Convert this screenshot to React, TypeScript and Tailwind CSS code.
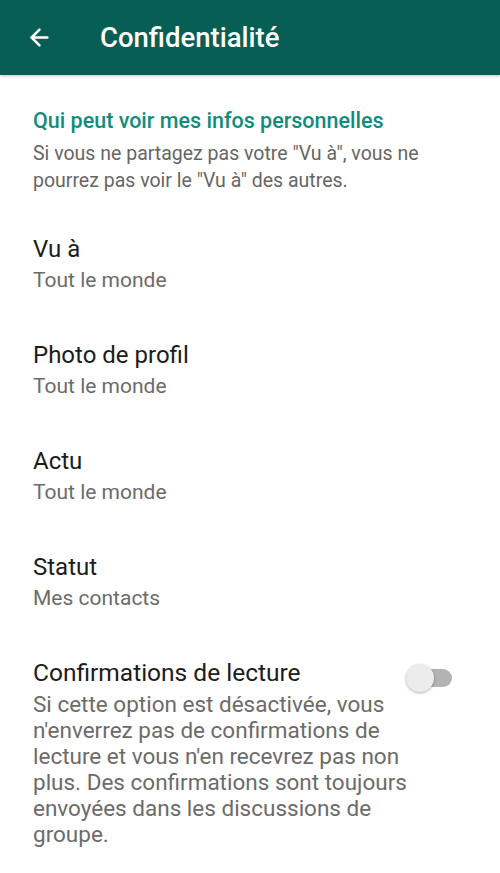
import { ArrowLeft } from "lucide-react";

const items = [
  { title: "Vu à", value: "Tout le monde" },
  { title: "Photo de profil", value: "Tout le monde" },
  { title: "Actu", value: "Tout le monde" },
  { title: "Statut", value: "Mes contacts" },
];

export default function App() {
  return (
    <div className="min-h-[873px] w-full bg-white font-['Roboto',sans-serif]">
      {/* Top bar */}
      <header className="flex h-[75px] items-center bg-[#075e54] px-[26px] shadow-[0_1px_3px_rgba(0,0,0,0.25)]">
        <ArrowLeft className="size-[27px] text-white" strokeWidth={2.2} />
        <h1 className="ml-[47px] text-[27.5px] font-medium text-white">
          Confidentialité
        </h1>
      </header>

      <section className="px-[33px] pt-[33px]">
        <h2 className="text-[21.5px] leading-[26px] font-medium text-[#128c7e]">
          Qui peut voir mes infos personnelles
        </h2>
        <p className="mt-[6px] text-[19.5px] leading-[27px] text-[#666666]">
          Si vous ne partagez pas votre "Vu à", vous ne pourrez pas voir le
          "Vu à" des autres.
        </p>
      </section>

      {/* Rows */}
      <div className="mt-[28px] flex flex-col">
        {items.map((item) => (
          <div key={item.title} className="flex h-[106px] flex-col px-[33px] pt-[12px]">
            <span className="text-[24px] leading-[30px] text-[#1c1c1c]">
              {item.title}
            </span>
            <span className="text-[21px] leading-[32px] text-[#6b6b6b]">
              {item.value}
            </span>
          </div>
        ))}

        <div className="flex flex-col px-[33px] pt-[12px]">
          <div className="flex h-[30px] items-start justify-between">
            <span className="text-[24.5px] leading-[30px] text-[#1c1c1c]">
              Confirmations de lecture
            </span>
            {/* Switch */}
            <div className="relative mt-[5px] mr-[15px] flex h-[30px] w-[46px] shrink-0 items-center">
              <div className="h-[18px] w-full rounded-full bg-[#b3b3b3]" />
              <div className="absolute top-[1px] left-0 size-[28px] rounded-full bg-[#ececec] shadow-[0_1px_3px_rgba(0,0,0,0.3)]" />
            </div>
          </div>
          <p className="mt-[3px] w-[385px] text-[22.5px] leading-[26px] text-[#6b6b6b]">
            Si cette option est désactivée, vous n'enverrez pas de
            confirmations de lecture et vous n'en recevrez pas non plus. Des
            confirmations sont toujours envoyées dans les discussions de
            groupe.
          </p>
        </div>
      </div>
    </div>
  );
}
